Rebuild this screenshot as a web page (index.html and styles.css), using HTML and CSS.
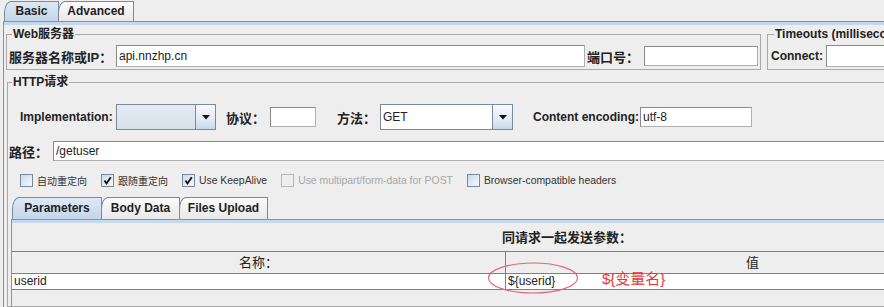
FILE: index.html
```html
<!DOCTYPE html>
<html>
<head>
<meta charset="utf-8">
<title>HTTP请求</title>
<link rel="stylesheet" href="styles.css">
</head>
<body>
<div class="tabs top-tabs">
  <div class="tab sel t-basic">Basic</div>
  <div class="tab t-adv">Advanced</div>
</div>
<div class="panel">
  <div class="server-row">
    <fieldset class="box web">
      <legend>Web服务器</legend>
      <div class="row">
        <span class="lbl cjk l-ip">服务器名称或IP：</span>
        <div class="field f-host">api.nnzhp.cn</div>
        <span class="lbl cjk l-port">端口号：</span>
        <div class="field f-port"></div>
      </div>
    </fieldset>
    <fieldset class="box timeouts">
      <legend>Timeouts (milliseconds)</legend>
      <div class="row">
        <span class="lbl l-connect">Connect:</span>
        <div class="field f-connect"></div>
      </div>
    </fieldset>
  </div>
  <fieldset class="box http">
    <legend>HTTP请求</legend>
    <div class="row impl-row">
      <span class="lbl l-impl">Implementation:</span>
      <div class="combo c-impl">
        <div class="combo-val"></div>
        <div class="combo-btn"><svg width="8" height="5" viewBox="0 0 8 5"><polygon points="0,0 8,0 4,4.5" fill="#111"/></svg></div>
      </div>
      <span class="lbl cjk l-proto">协议：</span>
      <div class="field f-proto"></div>
      <span class="lbl cjk l-method">方法：</span>
      <div class="combo c-method">
        <div class="combo-val white">GET</div>
        <div class="combo-btn"><svg width="8" height="5" viewBox="0 0 8 5"><polygon points="0,0 8,0 4,4.5" fill="#111"/></svg></div>
      </div>
      <span class="lbl l-enc">Content encoding:</span>
      <div class="field f-enc">utf-8</div>
    </div>
    <div class="row path-row">
      <span class="lbl cjk l-path">路径：</span>
      <div class="field f-path">/getuser</div>
    </div>
    <div class="checks">
      <div class="check"><span class="cb"></span><span class="ck-cjk">自动重定向</span></div>
      <div class="check"><span class="cb"><svg width="11" height="11" viewBox="0 0 11 11"><path d="M2.5 5.5 L4.5 8.5 L8.8 2.2" fill="none" stroke="#111" stroke-width="1.8"/></svg></span><span class="ck-cjk">跟随重定向</span></div>
      <div class="check"><span class="cb"><svg width="11" height="11" viewBox="0 0 11 11"><path d="M2.5 5.5 L4.5 8.5 L8.8 2.2" fill="none" stroke="#111" stroke-width="1.8"/></svg></span><span class="ck-en">Use KeepAlive</span></div>
      <div class="check disabled"><span class="cb"></span><span class="ck-en">Use multipart/form-data for POST</span></div>
      <div class="check"><span class="cb"></span><span class="ck-en">Browser-compatible headers</span></div>
    </div>
    <div class="tabs inner-tabs">
      <div class="tab sel t-params">Parameters</div>
      <div class="tab t-body">Body Data</div>
      <div class="tab t-files">Files Upload</div>
    </div>
    <div class="inner-panel">
      <div class="params-title">同请求一起发送参数：</div>
      <div class="table">
        <div class="thead">
          <div class="th">名称：</div>
          <div class="th">值</div>
        </div>
        <div class="tr">
          <div class="td">userid</div>
          <div class="td">${userid}</div>
        </div>
      </div>
      <svg class="mark-ellipse" width="92" height="34" viewBox="0 0 92 34"><ellipse cx="46" cy="17" rx="44.5" ry="15" fill="none" stroke="#e0677c" stroke-width="1.2"/></svg>
      <div class="mark-note">${变量名}</div>
    </div>
  </fieldset>
</div>
</body>
</html>
```

FILE: styles.css
```css
* { box-sizing: border-box; }
html, body { margin: 0; padding: 0; }
body {
  width: 884px;
  height: 307px;
  overflow: hidden;
  background: #eeeeee;
  font-family: "Liberation Sans", "Noto Sans CJK SC", sans-serif;
  font-size: 12px;
  color: #222;
}

/* tabs */
.tabs { display: flex; align-items: flex-end; }
.top-tabs { height: 21px; padding-left: 4px; }
.tab {
  height: 20px;
  border: 1px solid #7a8a99;
  border-bottom: none;
  border-top-left-radius: 7px 12px;
  background: linear-gradient(#fbfbfb, #e8e8e8);
  font-weight: bold;
  text-align: center;
  line-height: 19px;
  margin-right: -1px;
  color: #222;
}
.tab.sel { background: linear-gradient(#dde9f5, #c3d6ea); }
.t-basic { width: 55px; }
.t-adv { width: 76px; }

.panel {
  margin-left: 3px;
  width: 881px;
  height: 286px;
  overflow: hidden;
  border-top: 1px solid #8193ad;
  border-left: 1px solid #8193ad;
  box-shadow: inset 0 3px 0 #c6d8ed;
  padding-top: 3px;
}

/* fieldsets */
fieldset {
  margin: 0;
  border: 1px solid #a9a9a9;
  padding: 0 2px 2px 2px;
  min-width: 0;
}
legend {
  font-weight: bold;
  font-size: 12px;
  line-height: 14px;
  padding: 0 1px;
  margin-left: 3px;
  color: #222;
  white-space: nowrap;
}
.server-row { display: flex; margin-top: 2px; }
.web { margin-left: 2px; width: 755px; flex: none; }
.timeouts { margin-left: 6px; width: 300px; flex: none; padding-left: 3px; }

.row { display: flex; align-items: center; }
.web .row, .timeouts .row { margin-top: 4px; height: 22px; }

.lbl { font-weight: bold; flex: none; white-space: nowrap; }
.cjk { font-size: 13px; }

.field {
  flex: none;
  height: 20px;
  border: 1px solid #8a8a8a;
  border-right-color: #b0b0b0;
  border-bottom-color: #b0b0b0;
  background: #fff;
  padding-left: 2px;
  line-height: 18px;
  font-size: 12px;
  color: #222;
  white-space: nowrap;
}
.l-ip { width: 107px; }
.f-host { width: 469px; height: 22px; line-height: 20px; }
.l-port { width: 57px; margin-left: 2px; }
.f-port { width: 114px; }
.l-connect { width: 55px; }
.f-connect { width: 200px; height: 22px; }

.http {
  margin-left: 3px;
  margin-top: 5px;
  width: 1300px;
  height: 232px;
  padding: 0 0 0 1px;
}

.impl-row { margin-top: 15px; height: 26px; padding-left: 11px; }
.l-impl { width: 96px; }
.combo {
  flex: none;
  display: flex;
  height: 26px;
  border: 1px solid #7a8a99;
}
.combo-val {
  flex: 1;
  background: linear-gradient(#e3eaf2, #d8e1eb);
  padding-left: 2px;
  line-height: 24px;
}
.combo-val.white { background: #fff; }
.combo-btn {
  width: 20px;
  border-left: 1px solid #7a8a99;
  background: linear-gradient(#f7f9fc, #e4ecf5 55%, #c9d9ea);
  display: flex;
  align-items: center;
  justify-content: center;
}
.c-impl { width: 100px; }
.l-proto { width: 44px; margin-left: 10px; }
.f-proto { width: 46px; }
.l-method { width: 43px; margin-left: 21px; }
.c-method { width: 133px; }
.l-enc { width: 107px; margin-left: 20px; }
.f-enc { width: 112px; }

.path-row { margin-top: 11px; height: 20px; }
.l-path { width: 44px; }
.f-path { width: 1250px; }

/* checkboxes */
.checks {
  display: flex;
  align-items: center;
  gap: 14px;
  margin-top: 12px;
  height: 15px;
  padding-left: 11px;
}
.check { display: flex; align-items: center; white-space: nowrap; color: #333; }
.cb {
  width: 13px;
  height: 13px;
  margin-right: 4px;
  border: 1px solid #7a8a99;
  background: linear-gradient(135deg, #ccdaea, #f5f8fc);
  display: flex;
  align-items: center;
  justify-content: center;
}
.check.disabled { color: #a8a8a8; }
.check.disabled .cb { border-color: #b8b8b8; background: #eeeeee; }
.ck-cjk { font-size: 10px; }
.ck-en { font-size: 10.4px; }

/* inner tabs */
.inner-tabs { margin-top: 9px; padding-left: 3px; height: 22px; }
.inner-tabs .tab { height: 22px; line-height: 21px; }
.t-params { width: 90px; }
.t-body { width: 79px; }
.t-files { width: 89px; }

.inner-panel {
  position: relative;
  margin-left: 2px;
  height: 88px;
  border-top: 1px solid #8193ad;
  border-left: 1px solid #8193ad;
  box-shadow: inset 0 3px 0 #c6d8ed;
}
.params-title {
  margin-top: 10px;
  padding-left: 490px;
  font-weight: bold;
  font-size: 13px;
  line-height: 16px;
  color: #222;
}

.table { margin-top: 5px; width: 987px; }
.thead {
  display: flex;
  height: 22px;
  border-top: 1px solid #808080;
}
.th {
  width: 493px;
  text-align: center;
  line-height: 21px;
  font-size: 13px;
  color: #222;
}
.th:first-child { width: 494px; border-right: 1px solid #808080; }
.tr {
  display: flex;
  height: 17px;
  border-top: 1px solid #808080;
  border-bottom: 1px solid #808080;
  background: #fff;
}
.td {
  width: 493px;
  padding-left: 2px;
  line-height: 15px;
  font-size: 12px;
  color: #222;
}
.td:first-child { width: 494px; border-right: 1px solid #808080; }

/* annotations over the table */
.mark-ellipse { position: absolute; left: 475px; top: 41px; }
.mark-note {
  position: absolute;
  left: 590px;
  top: 50px;
  font-size: 15px;
  line-height: 18px;
  color: #e5393d;
  white-space: nowrap;
}
```
